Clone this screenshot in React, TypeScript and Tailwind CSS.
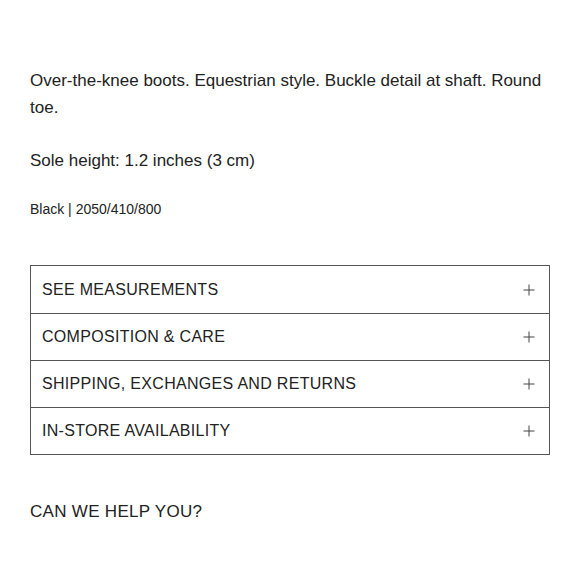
import React from "react";

const rows = [
  "SEE MEASUREMENTS",
  "COMPOSITION & CARE",
  "SHIPPING, EXCHANGES AND RETURNS",
  "IN-STORE AVAILABILITY",
];

function Plus() {
  return (
    <svg width="12" height="12" viewBox="0 0 12 12" className="shrink-0">
      <path d="M6 0.5V11.5M0.5 6H11.5" stroke="#444" strokeWidth="1" fill="none" />
    </svg>
  );
}

export default function App() {
  return (
    <div
      className="w-[580px] h-[580px] bg-white text-[#222] px-[30px] pt-[67px]"
      style={{ fontFamily: '"Liberation Sans", Arial, sans-serif' }}
    >
      <p className="text-[17px] leading-[27px]">
        Over-the-knee boots. Equestrian style. Buckle detail at shaft. Round toe.
      </p>
      <p className="text-[17px] leading-[27px] mt-[26px]">Sole height: 1.2 inches (3 cm)</p>
      <p className="text-[14px] leading-[20px] mt-[25px]">Black | 2050/410/800</p>
      <div className="mt-[46px] border border-[#555]">
        {rows.map((r, i) => (
          <div
            key={r}
            className={`flex items-center justify-between h-[47px] pl-[11px] pr-[14px] ${
              i > 0 ? "border-t border-[#555]" : ""
            }`}
          >
            <span className="text-[16px] tracking-[0.3px]">{r}</span>
            <Plus />
          </div>
        ))}
      </div>
      <p className="mt-[45px] text-[17px] leading-[24px] tracking-[0.3px]">CAN WE HELP YOU?</p>
    </div>
  );
}
